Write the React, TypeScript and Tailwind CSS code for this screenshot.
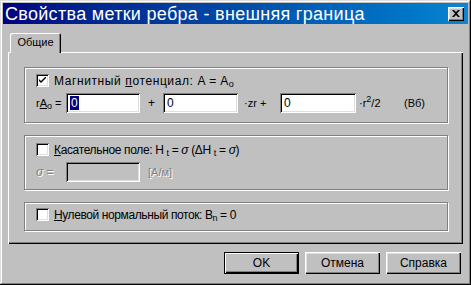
import React from "react";

const sunken =
  "shadow-[inset_1px_1px_#808080,inset_-1px_-1px_#fff,inset_2px_2px_#000,inset_-2px_-2px_#dfdfdf]";

function Checkbox({ checked }: { checked?: boolean }) {
  return (
    <div className={`w-[13px] h-[13px] bg-white flex items-center justify-center shrink-0 ${sunken}`}>
      {checked && (
        <svg width="7" height="7" viewBox="0 0 7 7">
          <path d="M0 2 L0 4 L2 6 L7 1 L7 -1 L2 4 Z" fill="#000" />
        </svg>
      )}
    </div>
  );
}

function Input({ w, children, disabled }: { w: string; children?: React.ReactNode; disabled?: boolean }) {
  return (
    <div
      className={`${w} h-[20px] ${disabled ? "bg-[#c0c0c0]" : "bg-white"} flex items-center pl-[4px] shrink-0 ${sunken}`}
    >
      {children}
    </div>
  );
}

function Group({ h, pt, children }: { h: string; pt: string; children: React.ReactNode }) {
  return (
    <div
      className={`w-[424px] ${h} ${pt} pl-[11px] border border-[#808080] shadow-[inset_1px_1px_#fff,1px_1px_#fff] flex flex-col`}
    >
      {children}
    </div>
  );
}

function Button({ children, def }: { children: React.ReactNode; def?: boolean }) {
  return (
    <div
      className={`h-[22px] w-[75px] flex items-center justify-center text-[12px] text-black ${
        def
          ? "border border-black shadow-[inset_1px_1px_#fff,inset_-1px_-1px_#000,inset_-2px_-2px_#808080]"
          : "shadow-[inset_1px_1px_#fff,inset_-1px_-1px_#000,inset_-2px_-2px_#808080,inset_2px_2px_#dfdfdf]"
      }`}
    >
      {children}
    </div>
  );
}

const disabledText = "text-[#808080] [text-shadow:1px_1px_0_#fff]";

export default function App() {
  return (
    <div className="w-[471px] h-[285px] bg-[#c0c0c0] p-[3px] flex flex-col font-['Liberation_Sans',Arial,sans-serif] text-black shadow-[inset_-1px_-1px_#000,inset_1px_1px_#dfdfdf,inset_-2px_-2px_#808080,inset_2px_2px_#fff]">
      {/* Title bar */}
      <div className="h-[21px] flex items-center justify-between bg-linear-to-r from-[#000080] to-[#1084d0] pl-[2px] pr-[4px]">
        <span className="text-white text-[18px] tracking-[0.3px] leading-none">Свойства метки ребра - внешняя граница</span>
        <div className="w-[16px] h-[14px] bg-[#c0c0c0] flex items-center justify-center shadow-[inset_1px_1px_#fff,inset_-1px_-1px_#000,inset_-2px_-2px_#808080,inset_2px_2px_#dfdfdf]">
          <svg width="8" height="7" viewBox="0 0 8 7">
            <path d="M0 0h2l2 2 2-2h2L5 3.5 8 7H6L4 5 2 7H0l3-3.5z" fill="#000" />
          </svg>
        </div>
      </div>

      {/* Tab */}
      <div className="mt-[9px] ml-[7px] relative z-10 -mb-[1px] w-[51px] h-[20px] bg-[#c0c0c0] rounded-t-[2px] shadow-[inset_1px_1px_#fff,inset_-1px_0_#000,inset_-2px_0_#808080] flex items-center justify-center text-[11px] pb-[1px]">
        Общие
      </div>

      {/* Panel */}
      <div className="ml-[5px] w-[455px] h-[192px] pt-[15px] pl-[16px] flex flex-col gap-[12px] shadow-[inset_1px_1px_#fff,inset_-1px_-1px_#000,inset_-2px_-2px_#808080]">
        <Group h="h-[56px]" pt="pt-[6px]">
          <div className="flex items-center h-[13px]">
            <Checkbox checked />
            <span className="ml-[5px] text-[12px] tracking-[0.6px] leading-none whitespace-nowrap">
              Магнитный <span className="underline">п</span>отенциал: A = A<sub className="text-[9px]">o</sub>
            </span>
          </div>
          <div className="flex items-center h-[20px] mt-[6px] text-[12px] whitespace-nowrap">
            <span className="w-[30px] text-[11px]">
              r<span className="underline">A</span>
              <sub className="text-[9px]">o</sub> =
            </span>
            <Input w="w-[74px]">
              <span className="bg-[#000080] text-white px-[1px] leading-[14px]">0</span>
            </Input>
            <span className="w-[23px] text-center">+</span>
            <Input w="w-[75px]">0</Input>
            <span className="ml-[6px] w-[36px] text-[11px]">·zr +</span>
            <Input w="w-[76px]">0</Input>
            <span className="ml-[3px] w-[45px] text-[11px]">
              ·r<sup className="text-[9px]">2</sup>/2
            </span>
            <span className="text-[11px]">(Вб)</span>
          </div>
        </Group>

        <Group h="h-[55px]" pt="pt-[7px]">
          <div className="flex items-center h-[13px]">
            <Checkbox />
            <span className="ml-[5px] text-[12px] tracking-[-0.35px] leading-none whitespace-nowrap">
              <span className="underline">К</span>асательное поле: H <sub className="text-[9px]">t</sub> = <i>σ</i> (ΔH{" "}
              <sub className="text-[9px]">t</sub> = <i>σ</i>)
            </span>
          </div>
          <div className="flex items-center h-[20px] mt-[6px] text-[12px] whitespace-nowrap">
            <span className={`w-[30px] ${disabledText}`}>
              <i>σ</i> =
            </span>
            <Input w="w-[74px]" disabled />
            <span className={`ml-[8px] text-[11px] ${disabledText}`}>[А/м]</span>
          </div>
        </Group>

        <Group h="h-[29px]" pt="pt-[5px]">
          <div className="flex items-center h-[13px]">
            <Checkbox />
            <span className="ml-[5px] text-[12px] tracking-[-0.4px] leading-none whitespace-nowrap">
              <span className="underline">Н</span>улевой нормальный поток: B<sub className="text-[9px]">n</sub> = 0
            </span>
          </div>
        </Group>
      </div>

      {/* Buttons */}
      <div className="mt-[8px] mr-[7px] flex justify-end gap-[6px]">
        <Button def>OK</Button>
        <Button>Отмена</Button>
        <Button>Справка</Button>
      </div>
    </div>
  );
}
